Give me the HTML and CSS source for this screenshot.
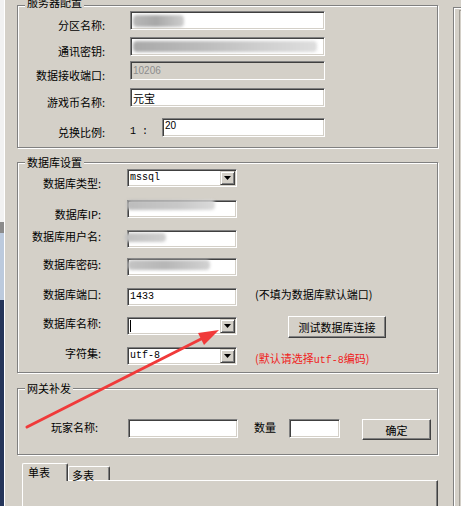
FILE: index.html
```html
<!DOCTYPE html>
<html lang="zh-CN">
<head>
<meta charset="utf-8">
<title>服务器配置</title>
<link rel="stylesheet" href="styles.css">
</head>
<body>
<div class="screen">
  <div class="desk"></div>
  <div class="dialog">
    <div class="main">
      <section class="group g1">
        <div class="gt">服务器配置</div>
        <div class="form">
          <div class="row">
            <span class="lbl">分区名称:</span>
            <div class="input wide"><span class="blur b-zone"></span></div>
          </div>
          <div class="row">
            <span class="lbl">通讯密钥:</span>
            <div class="input wide"><span class="blur b-key"></span></div>
          </div>
          <div class="row">
            <span class="lbl">数据接收端口:</span>
            <div class="input wide disabled"><span class="num">10206</span></div>
          </div>
          <div class="row">
            <span class="lbl">游戏币名称:</span>
            <div class="input wide"><span>元宝</span></div>
          </div>
          <div class="row">
            <span class="lbl">兑换比例:</span>
            <span class="ratio">1 :</span>
            <div class="input rate top"><span class="num">20</span></div>
          </div>
        </div>
      </section>

      <section class="group g2">
        <div class="gt">数据库设置</div>
        <div class="form">
          <div class="row low">
            <span class="lbl">数据库类型:</span>
            <div class="select"><span class="mono">mssql</span><span class="drop"><svg width="7" height="4" viewBox="0 0 7 4"><path d="M0 0H7L3.5 4Z"/></svg></span></div>
          </div>
          <div class="row low">
            <span class="lbl">数据库IP:</span>
            <div class="input"><span class="blur b-ip"></span></div>
          </div>
          <div class="row">
            <span class="lbl">数据库用户名:</span>
            <div class="input"><span class="blur b-user"></span></div>
          </div>
          <div class="row">
            <span class="lbl">数据库密码:</span>
            <div class="input"><span class="blur b-pwd"></span></div>
          </div>
          <div class="row">
            <span class="lbl">数据库端口:</span>
            <div class="input"><span class="mono">1433</span></div>
            <span class="note">(不填为数据库默认端口)</span>
          </div>
          <div class="row">
            <span class="lbl">数据库名称:</span>
            <div class="select"><span class="caret"></span><span class="drop"><svg width="7" height="4" viewBox="0 0 7 4"><path d="M0 0H7L3.5 4Z"/></svg></span></div>
            <button class="btn test" type="button">测试数据库连接</button>
          </div>
          <div class="row">
            <span class="lbl">字符集:</span>
            <div class="select"><span class="mono">utf-8</span><span class="drop"><svg width="7" height="4" viewBox="0 0 7 4"><path d="M0 0H7L3.5 4Z"/></svg></span></div>
            <span class="note red">(默认请选择<span class="mono">utf-8</span>编码)</span>
          </div>
        </div>
      </section>

      <section class="group g3">
        <div class="gt">网关补发</div>
        <div class="form">
          <div class="row">
            <span class="lbl">玩家名称:</span>
            <div class="input player"></div>
            <span class="qty">数量</span>
            <div class="input amount"></div>
            <button class="btn ok" type="button">确定</button>
          </div>
        </div>
      </section>

      <div class="tabs">
        <div class="tabstrip">
          <span class="tab sel">单表</span>
          <span class="tab other">多表</span>
        </div>
        <div class="panel"></div>
      </div>
    </div>
    <div class="side"><div class="side-inner"></div></div>
  </div>
</div>
<svg class="arrow" width="461" height="515" viewBox="0 0 461 515">
  <line x1="27" y1="427" x2="203" y2="338" stroke="#f03a3a" stroke-width="3" stroke-linecap="round"/>
  <polygon points="219,330 204,345 198,333" fill="#f03a3a"/>
</svg>
</body>
</html>
```

FILE: styles.css
```css
* { box-sizing: border-box; }
html, body { margin: 0; padding: 0; }
body {
  width: 461px;
  height: 515px;
  overflow: hidden;
  position: relative;
  background: #fff;
  color: #000;
  font: 11px/12px "Noto Sans CJK SC", "Liberation Sans", sans-serif;
}

.screen { display: flex; height: 506px; overflow: hidden; }
.desk {
  width: 4px;
  flex: none;
  background: linear-gradient(#f1f1f1 0 222px, #8b8b8b 222px 233px, #bccadd 233px 300px, #25355a 300px);
}
.dialog {
  flex: 1;
  display: flex;
  background: #d4d0c8;
  border-left: 1px solid #fff;
}
.main { width: 433px; flex: none; padding: 5px 0 0 12px; }
.side {
  width: 8px;
  flex: none;
  margin: 7px 0 0 15px;
  padding: 2px 0 0 5px;
  border-top: 1px solid #808080;
  border-left: 1px solid #808080;
  box-shadow: inset 1px 1px 0 #fff;
}
.side-inner { height: 100%; border-top: 1px solid #a09c94; border-left: 1px solid #a09c94; }

/* group boxes */
.group {
  width: 421px;
  border: 1px solid #808080;
  box-shadow: inset 1px 1px 0 #fff, 1px 1px 0 #fff;
}
.g1 { height: 143px; }
.g2 { height: 211px; margin-top: 14px; }
.g3 { height: 67px; margin-top: 15px; }
.gt {
  width: fit-content;
  margin: -8px 0 -6px 7px;
  padding: 0 2px;
  line-height: 14px;
  background: #d4d0c8;
}
.g1 .gt { margin-top: -11px; margin-bottom: -3px; }

.g1 .form { padding-top: 5px; }
.g2 .form { padding-top: 6px; }
.g3 .form { padding-top: 30px; }

.row { display: flex; align-items: flex-start; height: 19px; }
.g2 .row { height: 18px; }
.g1 .row:nth-child(2) { margin-top: 7px; }
.g1 .row:nth-child(3) { margin-top: 5px; }
.g1 .row:nth-child(4) { margin-top: 8px; }
.g1 .row:nth-child(5) { margin-top: 11px; }
.g2 .row:nth-child(2) { margin-top: 13px; }
.g2 .row:nth-child(3) { margin-top: 12px; }
.g2 .row:nth-child(4) { margin-top: 10px; }
.g2 .row:nth-child(5) { margin-top: 12px; }
.g2 .row:nth-child(6) { margin-top: 11px; }
.g2 .row:nth-child(7) { margin-top: 12px; }

.lbl { flex: none; text-align: right; white-space: nowrap; line-height: 12px; }
.g1 .lbl { width: 87px; margin-right: 25px; line-height: 28px; }
.g2 .lbl { width: 83px; margin-right: 26px; }
.g2 .low .lbl { line-height: 28px; }
.g3 .lbl { width: 80px; margin-right: 30px; line-height: 16px; }

.mono { font-family: "Liberation Mono", monospace; font-size: 10px; }
.num { font-family: "Liberation Sans", sans-serif; font-size: 10px; }

/* sunken edit box */
.input, .select {
  flex: none;
  height: 100%;
  display: flex;
  align-items: center;
  background: #fff;
  border: 1px solid;
  border-color: #808080 #fff #fff #808080;
  box-shadow: inset 1px 1px 0 #404040, inset -1px -1px 0 #d4d0c8;
}
.input { width: 110px; padding: 0 2px; }
.input.wide { width: 195px; }
.input.rate { width: 163px; }
.input.top { align-items: flex-start; padding-top: 1px; }
.input.disabled { background: #d4d0c8; color: #8d8d8d; }
.input.player { width: 110px; }
.input.amount { width: 51px; }

.ratio {
  flex: none;
  width: 32px;
  line-height: 28px;
  font-family: "Liberation Mono", monospace;
  font-size: 10px;
}

.select { width: 110px; padding: 1px 1px 1px 2px; }
.drop {
  margin-left: auto;
  width: 15px;
  height: 100%;
  display: flex;
  align-items: center;
  justify-content: center;
  background: #d4d0c8;
  border: 1px solid;
  border-color: #d4d0c8 #404040 #404040 #d4d0c8;
  box-shadow: inset 1px 1px 0 #fff, inset -1px -1px 0 #808080;
}
.drop svg { display: block; fill: #000; }
.caret { width: 1px; height: 12px; background: #000; }

/* privacy blur smudges */
.blur { display: block; flex: none; filter: blur(1.5px); border-radius: 4px; }
.b-zone { width: 51px; height: 12px; background: linear-gradient(90deg, #b8b8b8, #a8a8a8 45%, #cdcdcd); }
.b-key { width: 184px; height: 11px; background: linear-gradient(90deg, #a9a9a9, #bdbdbd 40%, #cfcfcf 70%, #dedede); }
.b-ip { width: 88px; height: 10px; margin: -8px 0 0 -3px; background: linear-gradient(90deg, #bcbcbc, #c8c8c8 60%, #dadada); }
.b-user { width: 41px; height: 9px; margin: -3px 0 0 -5px; background: linear-gradient(90deg, #c0c0c0, #cfcfcf); }
.b-pwd { width: 82px; height: 10px; margin: -4px 0 0 -2px; background: linear-gradient(90deg, #c4c4c4, #b6b6b6 45%, #d2d2d2); }

.note { flex: none; margin-left: 18px; line-height: 12px; white-space: nowrap; }
.note.red { color: #f01c1c; line-height: 22px; }

/* raised push button */
.btn {
  flex: none;
  display: flex;
  align-items: center;
  justify-content: center;
  padding: 0;
  background: #d4d0c8;
  color: #000;
  font: inherit;
  border: 1px solid;
  border-color: #fff #404040 #404040 #fff;
  box-shadow: inset -1px -1px 0 #808080;
}
.btn.test { width: 98px; height: 22px; margin: -1px 0 0 51px; }
.btn.ok { width: 69px; height: 21px; margin-left: 22px; }

.qty { flex: none; width: 35px; margin-left: 16px; line-height: 16px; }

/* tab control */
.tabs { width: 416px; margin: 8px 0 0 5px; }
.tabstrip { display: flex; align-items: flex-end; height: 17px; }
.tab {
  flex: none;
  background: #d4d0c8;
  border-top: 1px solid #fff;
  border-left: 1px solid #fff;
  border-right: 1px solid #404040;
  box-shadow: inset -1px 0 0 #808080;
  border-radius: 2px 2px 0 0;
}
.tab.sel {
  width: 46px;
  height: 18px;
  margin-bottom: -1px;
  padding-left: 5px;
  line-height: 17px;
  position: relative;
  z-index: 1;
}
.tab.other { width: 42px; height: 14px; padding-left: 3px; line-height: 16px; }
.panel {
  height: 40px;
  border-top: 1px solid #fff;
  border-left: 1px solid #fff;
  border-right: 1px solid #404040;
  box-shadow: inset -1px 0 0 #808080;
}

.arrow { position: absolute; left: 0; top: 0; pointer-events: none; }
```
